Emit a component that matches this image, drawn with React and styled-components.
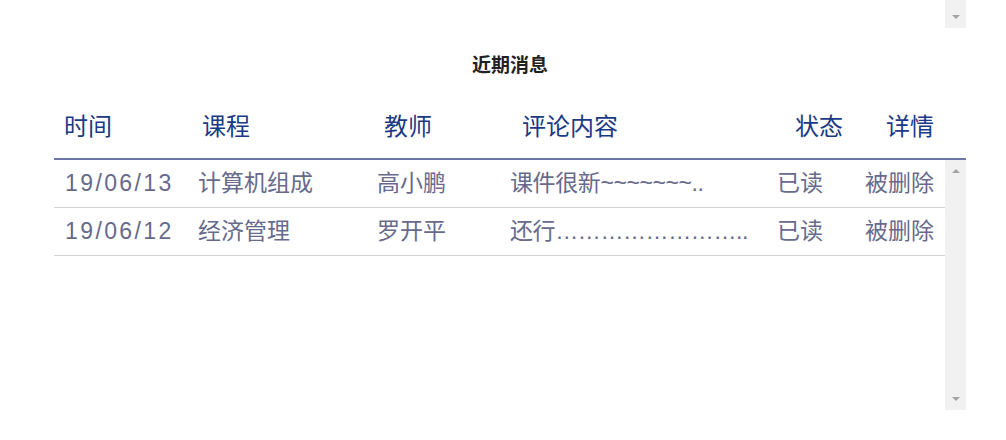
import styled, { createGlobalStyle } from 'styled-components';

const GlobalStyle = createGlobalStyle`
  body {
    margin: 0;
    background: #fff;
    font-family: "Liberation Sans", "Noto Sans CJK SC", sans-serif;
  }
`;

const messages = [
  { date: '19/06/13', course: '计算机组成', teacher: '高小鹏', comment: '课件很新~~~~~~~..', status: '已读', detail: '被删除' },
  { date: '19/06/12', course: '经济管理', teacher: '罗开平', comment: '还行' + '…'.repeat(8) + '..', status: '已读', detail: '被删除' },
];

const Page = styled.div`
  width: 1006px;
  height: 440px;
  padding: 0 40px 0 54px;
  box-sizing: border-box;
  display: flex;
  flex-direction: column;
`;

const TopStrip = styled.div`
  height: 28px;
  display: flex;
  justify-content: flex-end;
`;

const ScrollTrack = styled.div`
  width: 21px;
  height: ${p => p.$height}px;
  background: #f1f1f1;
  display: flex;
  flex-direction: column;
  justify-content: ${p => (p.$onlyDown ? 'flex-end' : 'space-between')};
  align-items: center;
  padding: 9px 0;
  box-sizing: border-box;
  flex-shrink: 0;
`;

const Arrow = styled.span`
  width: 0;
  height: 0;
  border-left: 4px solid transparent;
  border-right: 4px solid transparent;
  ${p => (p.$up ? 'border-bottom: 4px solid #a3a3a3;' : 'border-top: 4px solid #a3a3a3;')}
`;

const Title = styled.h2`
  margin: 0;
  height: 72px;
  padding-top: 26px;
  box-sizing: border-box;
  text-align: center;
  font-size: 19px;
  line-height: 24px;
  font-weight: bold;
  color: #222;
`;

const HeaderRow = styled.div`
  height: 60px;
  display: grid;
  grid-template-columns: 138px 182px 138px 273px 91px 1fr;
  padding: 0 0 4px 10px;
  box-sizing: border-box;
  align-items: center;
  line-height: 30px;
  border-bottom: 2px solid #6b76a6;
  color: #1b3a86;
  font-size: 24px;
`;

const Body = styled.div`
  display: flex;
  height: 250px;
`;

const RowList = styled.div`
  flex: 1;
`;

const Row = styled.div`
  height: 48px;
  display: grid;
  grid-template-columns: 134px 179px 133px 267px 88px 1fr;
  padding: 0 0 2px 10px;
  align-items: center;
  line-height: 30px;
  border-bottom: 1px solid #d2d2d2;
  box-sizing: border-box;
  color: #676a8c;
  font-size: 23px;
  white-space: nowrap;
`;

const DateCell = styled.span`
  letter-spacing: 2.4px;
  padding-left: 1px;
`;

const CommentCell = styled.span`
  overflow: hidden;
  letter-spacing: -0.4px;
`;

export default function App() {
  return (
    <>
      <GlobalStyle />
      <Page>
        <TopStrip>
          <ScrollTrack $height={28} $onlyDown>
            <Arrow />
          </ScrollTrack>
        </TopStrip>
        <Title>近期消息</Title>
        <HeaderRow>
          <span>时间</span>
          <span>课程</span>
          <span>教师</span>
          <span>评论内容</span>
          <span>状态</span>
          <span>详情</span>
        </HeaderRow>
        <Body>
          <RowList>
            {messages.map(m => (
              <Row key={m.date}>
                <DateCell>{m.date}</DateCell>
                <span>{m.course}</span>
                <span>{m.teacher}</span>
                <CommentCell>{m.comment}</CommentCell>
                <span>{m.status}</span>
                <span>{m.detail}</span>
              </Row>
            ))}
          </RowList>
          <ScrollTrack $height={250}>
            <Arrow $up />
            <Arrow />
          </ScrollTrack>
        </Body>
      </Page>
    </>
  );
}
